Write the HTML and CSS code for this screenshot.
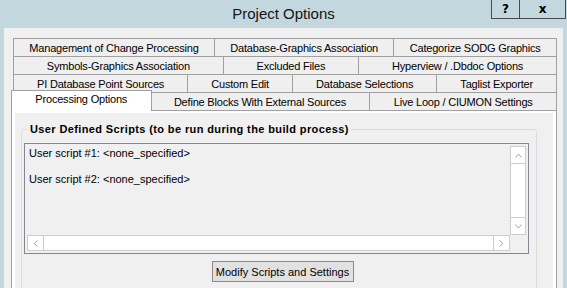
FILE: index.html
```html
<!DOCTYPE html>
<html lang="en">
<head>
    <meta charset="UTF-8">
    <title>Project Options</title>
    <link rel="stylesheet" href="styles.css">
</head>
<body>
    <div class="window">
        <div class="titlebar">
            <span></span>
            <div class="title">Project Options</div>
            <div class="caption-buttons">
                <span class="cap-btn help">?</span>
                <span class="cap-btn close">x</span>
            </div>
        </div>

        <div class="client">
            <div class="tabs">
                <div class="tab-row">
                    <div class="tab">Management of Change Processing</div>
                    <div class="tab">Database-Graphics Association</div>
                    <div class="tab">Categorize SODG Graphics</div>
                </div>
                <div class="tab-row">
                    <div class="tab">Symbols-Graphics Association</div>
                    <div class="tab">Excluded Files</div>
                    <div class="tab">Hyperview / .Dbdoc Options</div>
                </div>
                <div class="tab-row">
                    <div class="tab">PI Database Point Sources</div>
                    <div class="tab">Custom Edit</div>
                    <div class="tab">Database Selections</div>
                    <div class="tab">Taglist Exporter</div>
                </div>
                <div class="tab-row">
                    <div class="tab active">Processing Options</div>
                    <div class="tab">Define Blocks With External Sources</div>
                    <div class="tab">Live Loop / CIUMON Settings</div>
                </div>

                <div class="panel">
                    <div class="page">
                        <fieldset class="group">
                            <legend>User Defined Scripts (to be run during the build process)</legend>

                            <div class="listbox">
                                <div class="items">
                                    <div class="item">User script #1: &lt;none_specified&gt;</div>
                                    <div class="item">User script #2: &lt;none_specified&gt;</div>
                                </div>
                                <div class="vscroll">
                                    <span class="arrow up">
                                        <svg width="7" height="5" viewBox="0 0 7 5"><polyline points="0.5,4.5 3.5,1 6.5,4.5" fill="none" stroke="#a6a6a6"/></svg>
                                    </span>
                                    <span class="arrow down">
                                        <svg width="7" height="5" viewBox="0 0 7 5"><polyline points="0.5,0.5 3.5,4 6.5,0.5" fill="none" stroke="#a6a6a6"/></svg>
                                    </span>
                                </div>
                                <div class="hscroll">
                                    <span class="arrow left">
                                        <svg width="5" height="7" viewBox="0 0 5 7"><polyline points="4.5,0.5 1,3.5 4.5,6.5" fill="none" stroke="#a6a6a6"/></svg>
                                    </span>
                                    <span class="arrow right">
                                        <svg width="5" height="7" viewBox="0 0 5 7"><polyline points="0.5,0.5 4,3.5 0.5,6.5" fill="none" stroke="#a6a6a6"/></svg>
                                    </span>
                                </div>
                                <div class="corner"></div>
                            </div>

                            <div class="actions">
                                <button id="modifyScripts">Modify Scripts and Settings</button>
                            </div>
                        </fieldset>
                    </div>
                </div>
            </div>
        </div>
    </div>
</body>
</html>
```

FILE: styles.css
```css
body {
    margin: 0;
    background: #c3d7de;
    font-family: "Liberation Sans", Arial, sans-serif;
    font-size: 11px;
    color: #000;
}

.window {
    width: 567px;
    height: 288px;
    overflow: hidden;
    display: flex;
    flex-direction: column;
}

/* title bar */
.titlebar {
    flex: none;
    height: 28px;
    display: grid;
    grid-template-columns: 1fr auto 1fr;
}

.title {
    font-size: 15px;
    line-height: 28px;
    color: #141414;
}

.caption-buttons {
    justify-self: end;
    align-self: start;
    display: flex;
    margin-right: 1px;
}

.cap-btn {
    height: 18px;
    border: 1px solid #4a4a4a;
    border-top: none;
    font-family: "DejaVu Sans", sans-serif;
    font-weight: bold;
    font-size: 12px;
    line-height: 18px;
    text-align: center;
}

.cap-btn.help {
    width: 27px;
    border-right: none;
}

.cap-btn.close {
    width: 45px;
}

/* dialog body */
.client {
    flex: 1;
    min-height: 0;
    margin: 0 4px;
    padding: 10px 6px 0 7px;
    background: #f0f0f0;
    overflow: hidden;
}

.tabs {
    display: flex;
    flex-direction: column;
}

.tab-row {
    display: flex;
    height: 18px;
    padding-left: 2px;
}

.tab {
    flex: 1 1 auto;
    padding: 0 6px;
    border: 1px solid #a0a0a0;
    border-bottom: none;
    border-right: none;
    background: #efefef;
    text-align: center;
    line-height: 18px;
    letter-spacing: -0.2px;
    white-space: nowrap;
}

.tab:last-child {
    border-right: 1px solid #a0a0a0;
}

.tab.active {
    position: relative;
    z-index: 1;
    margin: -2px -2px -1px;
    border-right: 1px solid #a0a0a0;
    background: #fff;
    line-height: 17px;
}

.panel {
    flex: none;
    height: 200px;
    border: 1px solid #a0a0a0;
    background: #fff;
    padding: 2px 3px 0 3px;
}

.page {
    height: 100%;
    background: #f0f0f0;
    overflow: hidden;
}

/* group box */
.group {
    min-width: 0;
    margin: 9px 16px 0 6px;
    padding: 7px 7px 20px 2px;
    border: 1px solid #dcdcdc;
    border-radius: 3px;
}

.group legend {
    margin-left: 4px;
    padding: 0 2px;
    font-weight: bold;
    line-height: 14px;
    letter-spacing: 0.38px;
}

/* script list */
.listbox {
    box-sizing: border-box;
    height: 111px;
    padding: 2px;
    border: 1px solid #828790;
    background: #f0f0f0;
    display: grid;
    grid-template-columns: 1fr 16px;
    grid-template-rows: 1fr 16px;
}

.items {
    padding-left: 2px;
    overflow: hidden;
}

.item {
    line-height: 14px;
    margin-bottom: 12px;
    white-space: nowrap;
}

.vscroll,
.hscroll {
    display: flex;
    background: #fff;
    border: 1px solid #cdcdcd;
}

.vscroll {
    flex-direction: column;
    justify-content: space-between;
}

.hscroll {
    justify-content: space-between;
}

.arrow {
    display: flex;
    align-items: center;
    justify-content: center;
}

.arrow svg {
    display: block;
}

.vscroll .arrow {
    height: 16px;
}

.arrow.up {
    border-bottom: 1px solid #cdcdcd;
}

.arrow.down {
    border-top: 1px solid #cdcdcd;
}

.hscroll .arrow {
    width: 15px;
}

.arrow.left {
    border-right: 1px solid #cdcdcd;
}

.arrow.right {
    border-left: 1px solid #cdcdcd;
}

.corner {
    background: #f0f0f0;
}

.actions {
    display: flex;
    justify-content: center;
    padding-left: 12px;
    margin-top: 7px;
}

#modifyScripts {
    width: 142px;
    height: 21px;
    padding: 0;
    font-family: "Liberation Sans", Arial, sans-serif;
    font-size: 11px;
    color: #000;
    background: #e1e1e1;
    border: 1px solid #8a8a8a;
}
```
